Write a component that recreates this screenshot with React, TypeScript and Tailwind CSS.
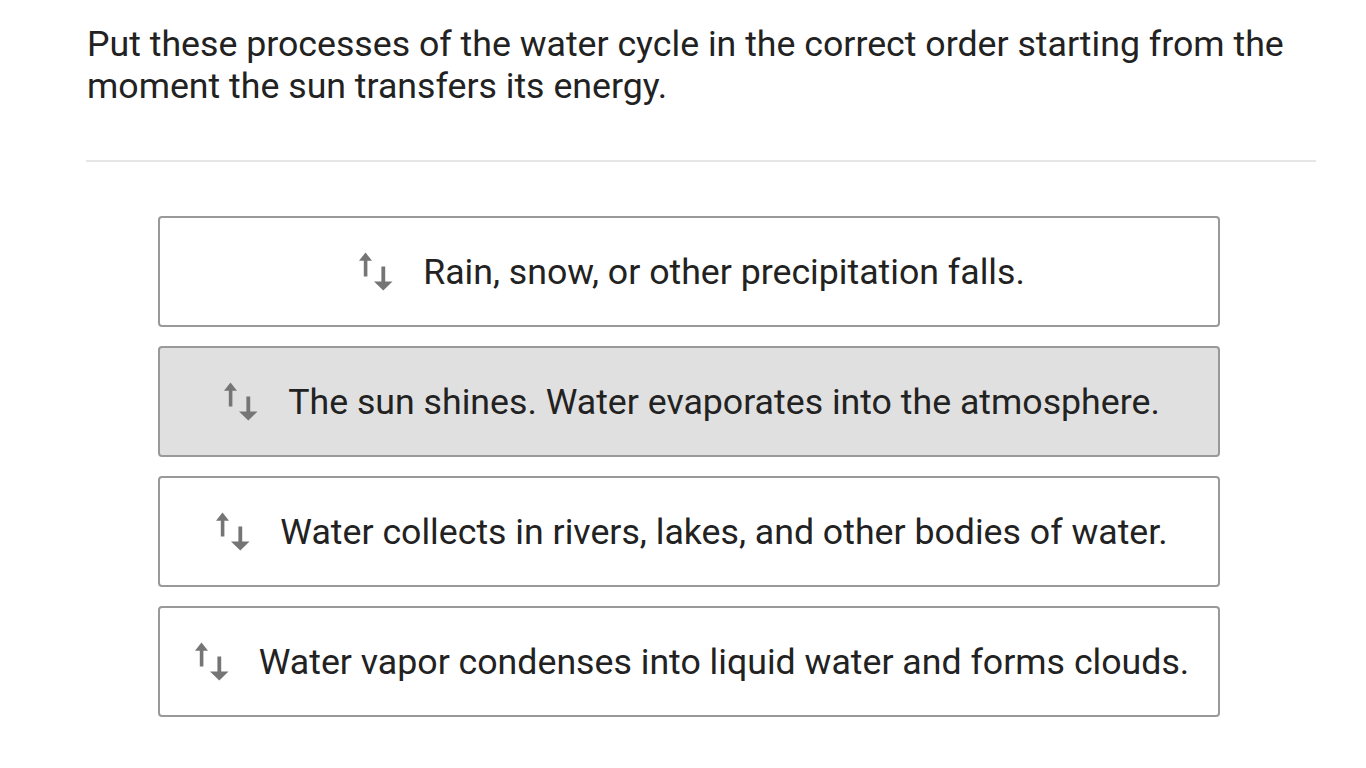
import React from 'react';

// Up/down reorder handle
const SortIcon = () => (
  <svg width="34" height="39" viewBox="0 0 34 39" className="shrink-0" fill="#757575">
    <path d="M0 8.8 L6.5 0.5 L13 8.8 Z" />
    <rect x="4.8" y="7" width="3.6" height="17.5" />
    <rect x="22.4" y="14.5" width="3.8" height="16.5" />
    <path d="M15 29.5 L24.3 38.5 L33.5 29.5 Z" />
  </svg>
);

const items = [
  { text: 'Rain, snow, or other precipitation falls.', active: false },
  { text: 'The sun shines. Water evaporates into the atmosphere.', active: true },
  { text: 'Water collects in rivers, lakes, and other bodies of water.', active: false },
  { text: 'Water vapor condenses into liquid water and forms clouds.', active: false },
];

export default function App() {
  return (
    <div className="min-h-screen bg-white pl-[86px] pr-[50px] pt-[23px] font-['Roboto',sans-serif] text-[#222222]">
      <p className="text-[35.7px] leading-[42px] pl-px">
        Put these processes of the water cycle in the correct order starting from the moment the sun
        transfers its energy.
      </p>

      <div className="mt-[53px] h-[2px] bg-[#e6e6e6]" />

      <div className="ml-[72px] mt-[54px] flex w-[1062px] flex-col gap-[19px]">
        {items.map((item) => (
          <div
            key={item.text}
            className={
              item.active
                ? 'flex h-[111px] items-center justify-center gap-[30px] rounded-[4px] border-2 border-[#999999] bg-[#e0e0e0] pl-[6px]'
                : 'flex h-[111px] items-center justify-center gap-[30px] rounded-[4px] border-2 border-[#999999] bg-white pl-[6px]'
            }
          >
            <SortIcon />
            <span className="text-[35.7px] leading-none pt-[3px]">{item.text}</span>
          </div>
        ))}
      </div>
    </div>
  );
}
